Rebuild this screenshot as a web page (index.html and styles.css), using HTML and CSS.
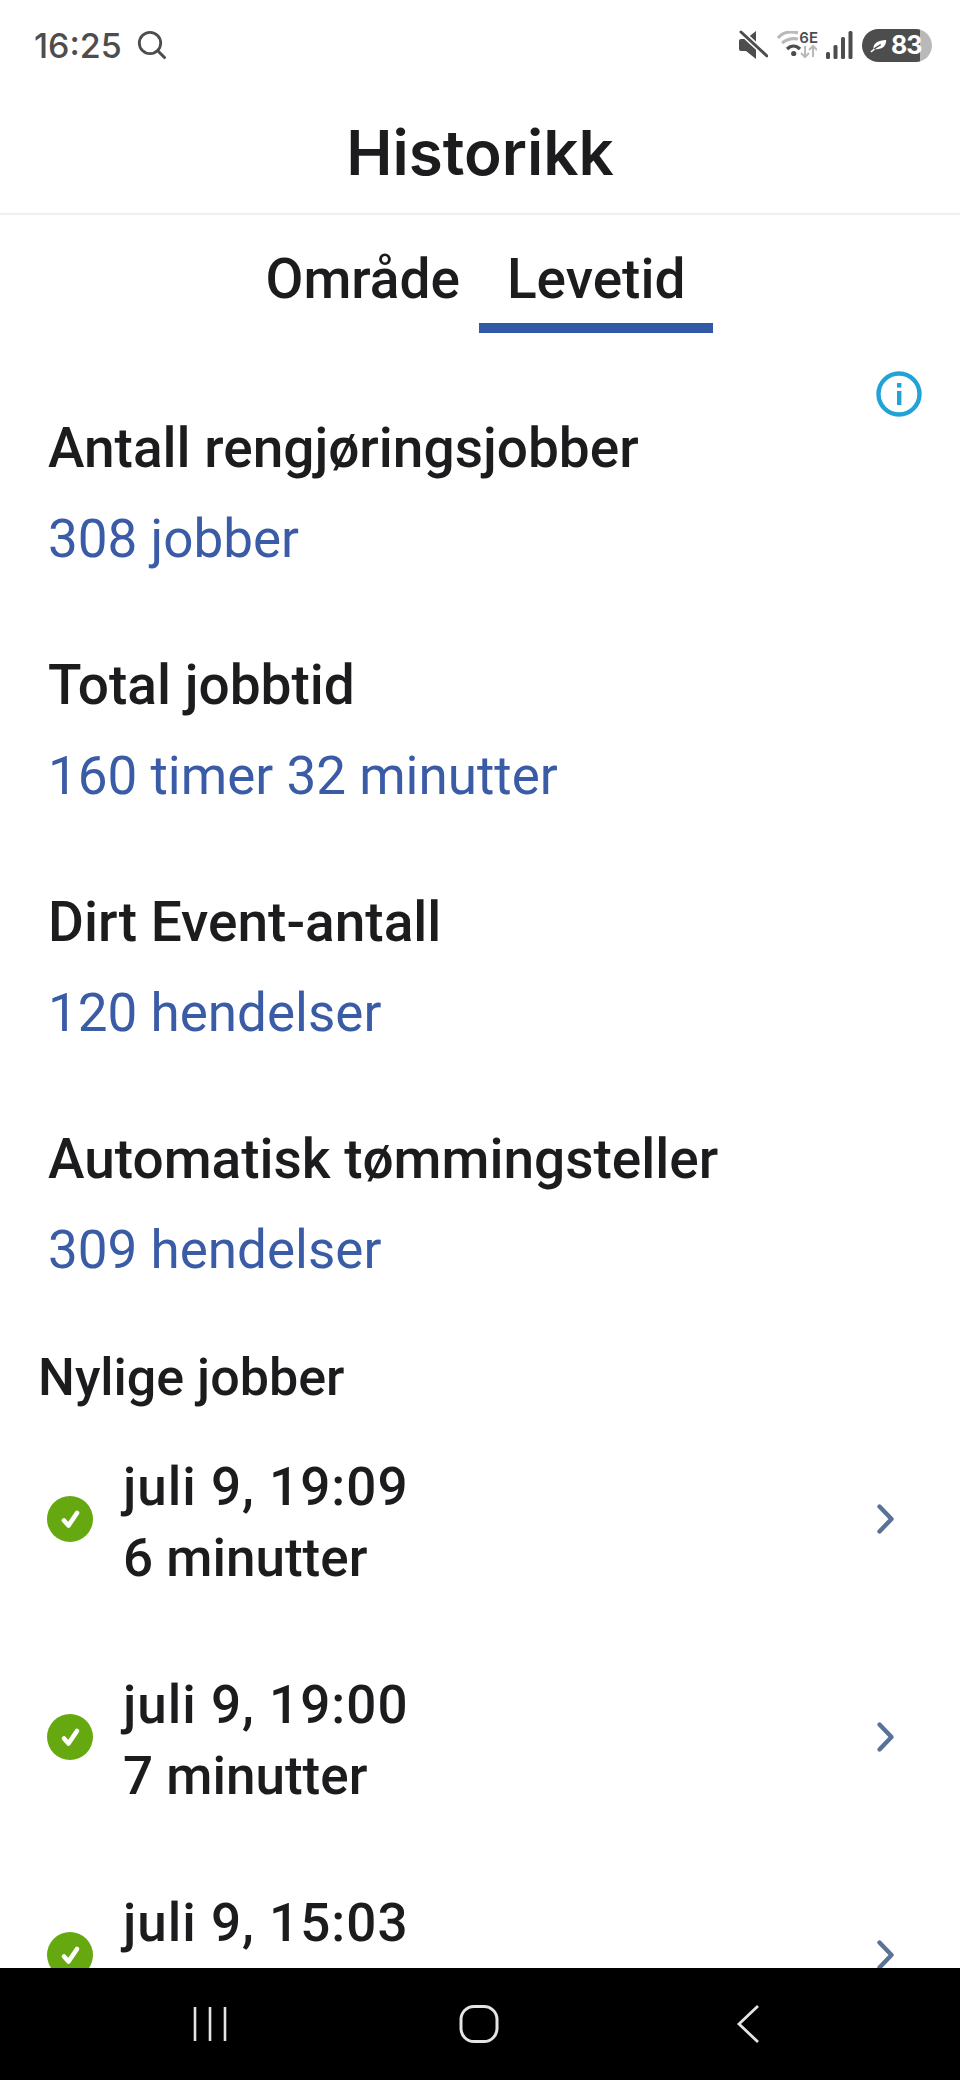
FILE: index.html
```html
<!DOCTYPE html>
<html lang="no">
<head>
  <meta charset="UTF-8">
  <title>Historikk</title>
  <meta name="viewport" content="width=device-width, initial-scale=1">
  <link rel="stylesheet" href="styles.css">
</head>
<body>
  <div class="phone">
    <div class="status-bar">
      <div class="status-left">
        <span class="clock">16:25</span>
        <svg class="ic-search" viewBox="0 0 30 30" width="30" height="30"><circle cx="13" cy="13" r="10.700" fill="none" stroke="#4d4d4d" stroke-width="2.800"/><path d="M21 21l6.500 6.500" stroke="#4d4d4d" stroke-width="3" stroke-linecap="round"/></svg>
      </div>
      <div class="status-right">
        <svg class="ic-mute" viewBox="0 0 30 30" width="30" height="30"><path d="M1 11a2 2 0 0 1 2-2h5l10-8v28l-10-8H3a2 2 0 0 1-2-2z" fill="#4d4d4d"/><path d="M1 0l28 26" stroke="#fff" stroke-width="6"/><path d="M3 2l26 24" stroke="#4d4d4d" stroke-width="3" stroke-linecap="round"/></svg>
        <span class="wifi">
          <svg viewBox="0 0 40 28" width="40" height="28"><path d="M1 7C6 1 14 0 21 2" fill="none" stroke="#b9b9b9" stroke-width="3.200"/><path d="M5 12c5-4 11-5 16-4" fill="none" stroke="#b9b9b9" stroke-width="3.200"/><path d="M10 18c4-4 9-4 13 0" fill="none" stroke="#4d4d4d" stroke-width="3.200"/><circle cx="16.700" cy="22.500" r="2.600" fill="#4d4d4d"/><path d="M28 15v11m-4-4l4 4 4-4M36 26V15m-4 4l4-4 4 4" fill="none" stroke="#b9b9b9" stroke-width="2"/></svg>
          <span class="wifi-label">6E</span>
        </span>
        <svg class="ic-signal" viewBox="0 0 27 30" width="27" height="30"><rect x="0" y="22" width="4" height="7" rx="1.500" fill="#4d4d4d"/><rect x="7.500" y="15" width="4" height="14" rx="1.500" fill="#4d4d4d"/><rect x="15" y="7" width="4" height="22" rx="1.500" fill="#4d4d4d"/><rect x="22.500" y="1" width="4" height="28" rx="1.500" fill="#4d4d4d"/></svg>
        <span class="battery">
          <svg viewBox="0 0 20 16" width="18" height="15"><path d="M4 12C3 6 9 2 18 2c0 8-6 11-13 10z" fill="#fff"/><path d="M1 15c2-2 5-5 11-8" fill="none" stroke="#4d4d4d" stroke-width="1.400"/><path d="M1 15l4-3" stroke="#fff" stroke-width="1.600"/></svg>
          <span class="battery-num">83</span>
        </span>
      </div>
    </div>

    <header class="title-bar"><h1>Historikk</h1></header>

    <main class="content">
      <nav class="tabs">
        <a class="tab">Område</a>
        <a class="tab active">Levetid</a>
      </nav>

      <div class="info-row">
        <svg viewBox="0 0 46 46" width="46" height="46"><circle cx="23" cy="23" r="20.500" fill="none" stroke="#22a3d8" stroke-width="4.400"/><rect x="21" y="20" width="4.400" height="14" fill="#22a3d8"/><rect x="21" y="12" width="4.400" height="4.600" fill="#22a3d8"/></svg>
      </div>

      <section class="stat">
        <div class="stat-label">Antall rengjøringsjobber</div>
        <div class="stat-value">308 jobber</div>
      </section>
      <section class="stat">
        <div class="stat-label">Total jobbtid</div>
        <div class="stat-value">160 timer 32 minutter</div>
      </section>
      <section class="stat">
        <div class="stat-label">Dirt Event-antall</div>
        <div class="stat-value">120 hendelser</div>
      </section>
      <section class="stat">
        <div class="stat-label">Automatisk tømmingsteller</div>
        <div class="stat-value">309 hendelser</div>
      </section>

      <h2 class="recent-title">Nylige jobber</h2>

      <div class="job">
        <svg class="job-check" viewBox="0 0 46 46" width="46" height="46"><circle cx="23" cy="23" r="23" fill="#66a80f"/><path d="M17 24.500l4.500 5 8.500-12.500" fill="none" stroke="#fff" stroke-width="4.600" stroke-linejoin="round" stroke-linecap="round"/></svg>
        <div class="job-text"><div class="job-date">juli 9, 19:09</div><div>6 minutter</div></div>
        <svg class="job-arrow" viewBox="0 0 20 32" width="20" height="32"><path d="M3.500 3.500L15.500 16 3.500 28.500" fill="none" stroke="#5a7297" stroke-width="4.400" stroke-linecap="round" stroke-linejoin="round"/></svg>
      </div>
      <div class="job">
        <svg class="job-check" viewBox="0 0 46 46" width="46" height="46"><circle cx="23" cy="23" r="23" fill="#66a80f"/><path d="M17 24.500l4.500 5 8.500-12.500" fill="none" stroke="#fff" stroke-width="4.600" stroke-linejoin="round" stroke-linecap="round"/></svg>
        <div class="job-text"><div class="job-date">juli 9, 19:00</div><div>7 minutter</div></div>
        <svg class="job-arrow" viewBox="0 0 20 32" width="20" height="32"><path d="M3.500 3.500L15.500 16 3.500 28.500" fill="none" stroke="#5a7297" stroke-width="4.400" stroke-linecap="round" stroke-linejoin="round"/></svg>
      </div>
      <div class="job">
        <svg class="job-check" viewBox="0 0 46 46" width="46" height="46"><circle cx="23" cy="23" r="23" fill="#66a80f"/><path d="M17 24.500l4.500 5 8.500-12.500" fill="none" stroke="#fff" stroke-width="4.600" stroke-linejoin="round" stroke-linecap="round"/></svg>
        <div class="job-text"><div class="job-date">juli 9, 15:03</div></div>
        <svg class="job-arrow" viewBox="0 0 20 32" width="20" height="32"><path d="M3.500 3.500L15.500 16 3.500 28.500" fill="none" stroke="#5a7297" stroke-width="4.400" stroke-linecap="round" stroke-linejoin="round"/></svg>
      </div>
    </main>

    <div class="nav-bar">
      <svg viewBox="0 0 36 36" width="36" height="36"><path d="M3 1v34M18 1v34M33 1v34" stroke="#e4e4e4" stroke-width="2.600"/></svg>
      <svg class="nav-home" viewBox="0 0 40 40" width="40" height="40"><rect x="2" y="2.500" width="36" height="35" rx="13" fill="none" stroke="#e4e4e4" stroke-width="3"/></svg>
      <svg viewBox="0 0 24 40" width="24" height="40"><path d="M22 2L3 20l19 18" fill="none" stroke="#e4e4e4" stroke-width="2.800"/></svg>
    </div>
  </div>
</body>
</html>
```

FILE: styles.css
```css
* { box-sizing: border-box; }
html, body { margin: 0; padding: 0; }
body { font-family: Roboto, "Noto Sans", sans-serif; background: #fff; color: #1c1c1e; }
.phone { width: 960px; height: 2080px; display: flex; flex-direction: column; overflow: hidden; }

.status-bar { height: 90px; flex: none; display: flex; justify-content: space-between; align-items: center; padding: 0 28px 0 34px; color: #4d4d4d; }
.status-left { display: flex; align-items: center; gap: 15px; }
.clock { font-family: Inter, Roboto, sans-serif; font-size: 34px; font-weight: 500; }
.status-right { display: flex; align-items: center; gap: 9px; }
.wifi { position: relative; display: block; width: 40px; height: 28px; }
.wifi svg { display: block; }
.wifi-label { position: absolute; right: -1px; top: -3px; font-family: Inter, sans-serif; font-size: 15px; font-weight: 600; color: #4d4d4d; }
.battery { width: 70px; height: 33px; border-radius: 17px; display: flex; align-items: center; gap: 3px; padding-left: 8px; color: #fff; background: linear-gradient(to right, #4d4d4d 0 58px, #b9b9b9 58px); }
.battery-num { font-family: Inter, sans-serif; font-size: 25px; font-weight: 700; letter-spacing: -1px; }

.title-bar { height: 125px; flex: none; display: flex; align-items: center; justify-content: center; border-bottom: 2px solid #f0f0f0; padding-top: 2px; }
.title-bar h1 { margin: 0; font-family: Inter, Roboto, sans-serif; font-size: 62px; font-weight: 600; }

.content { flex: 1; min-height: 0; overflow: hidden; }

.tabs { display: flex; justify-content: center; height: 118px; }
.tab { height: 118px; padding: 29px 19px 0; font-size: 55px; font-weight: 500; line-height: 70px; border-bottom: 10px solid transparent; }
.tab.active { padding: 29px 28px 0; border-bottom-color: #3358a5; }

.info-row { display: flex; justify-content: flex-end; padding: 38px 38px 0 0; height: 60px; }

.stat { height: 237px; padding: 0 48px; }
.stat-label { font-size: 55px; font-weight: 500; line-height: 60px; padding-top: 25px; }
.stat-value { font-size: 53px; font-weight: 400; line-height: 60px; padding-top: 31px; color: #3a5ba5; }

.recent-title { margin: 0; padding: 7px 0 8px 38px; font-size: 52px; font-weight: 500; line-height: 60px; }

.job { height: 218px; display: flex; align-items: flex-start; padding: 0 64px 0 47px; }
.job-check { flex: none; margin-top: 80px; }
.job-text { flex: 1; padding: 36px 0 0 30px; font-size: 53px; font-weight: 500; line-height: 71px; }
.job-date { letter-spacing: 1px; }
.job-arrow { flex: none; margin-top: 87px; }

.nav-bar { height: 112px; flex: none; background: #000; display: flex; align-items: center; justify-content: space-between; padding: 0 200px 0 192px; }
.nav-home { margin-right: 6px; }
```
